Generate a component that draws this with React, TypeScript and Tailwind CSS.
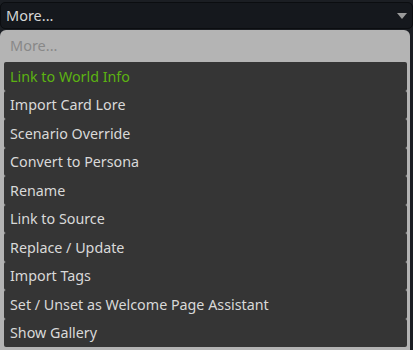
import React from 'react';

const items = [
  'Link to World Info',
  'Import Card Lore',
  'Scenario Override',
  'Convert to Persona',
  'Rename',
  'Link to Source',
  'Replace / Update',
  'Import Tags',
  'Set / Unset as Welcome Page Assistant',
  'Show Gallery',
];

export default function App() {
  return (
    <div
      className="w-[413px] h-[350px] overflow-hidden bg-[#1b1e23]"
      style={{ fontFamily: '"Noto Sans", "Open Sans", sans-serif' }}
    >
      <div className="pt-[2px]">
        <div className="h-[27px] flex items-center justify-between rounded-[5px] border border-[#0b0d10] bg-[#15181d] pl-[5px] pr-[5px]">
          <span className="text-[14.5px] text-[#d6d6d6]">More...</span>
          <svg width="10" height="6" viewBox="0 0 10 6">
            <path d="M0 0 L10 0 L5 6 Z" fill="#9a9a9a" />
          </svg>
        </div>
      </div>
      <div className="mt-[1px] w-[410px] h-[320px] rounded-t-[6px] bg-[#b4b4b4] pl-[4px] pr-[3px]">
        <div className="h-[32px] flex items-center pl-[6px] text-[14.5px] text-[#888888]">More...</div>
        <div className="flex flex-col">
          {items.map((t, i) => (
            <div
              key={t}
              className={`h-[28.5px] flex items-center pl-[6px] rounded-[2px] bg-[#353535] text-[14.3px] ${
                i === 0 ? 'text-[#5cb312]' : 'text-[#d9d9d9]'
              }`}
            >
              {t}
            </div>
          ))}
        </div>
      </div>
    </div>
  );
}
